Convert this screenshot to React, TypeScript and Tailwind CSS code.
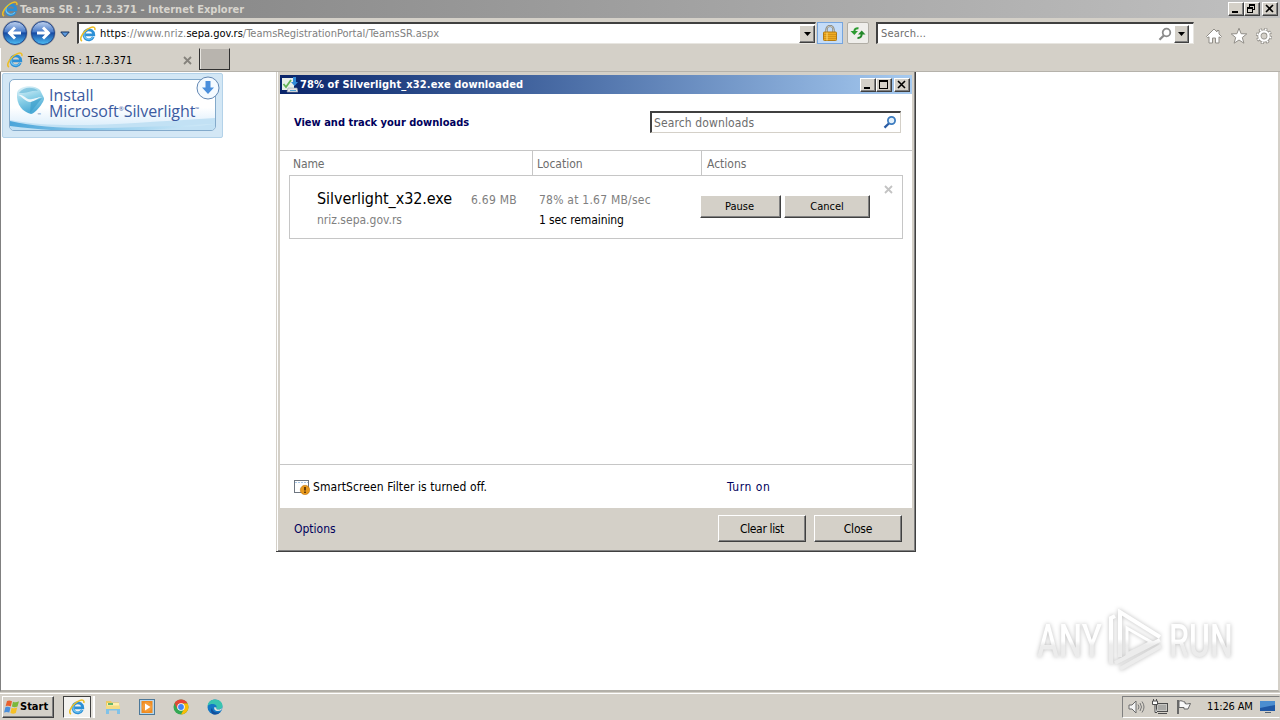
import React from "react";

const raised =
  "border border-t-white border-l-white border-r-[#404040] border-b-[#404040] shadow-[inset_-1px_-1px_0_#808080] bg-[#d4d0c8]";

function IELogo({ className = "w-[16px] h-[16px]" }: { className?: string }) {
  return (
    <svg viewBox="0 0 16 16" className={`${className} shrink-0`}>
      <path d="M13.3 11A5 5 0 1 1 13.800 8.900H5.400" fill="none" stroke="#2b8fd6" strokeWidth="2.800" />
      <path d="M12.900 11.200A5 5 0 0 1 4 9.500a5 5 0 0 1 1.500-4.600" fill="none" stroke="#74c6f2" strokeWidth="1.100" />
      <path d="M2 15.200C-1.500 13 3.500 4.400 10.500 1.600c3.200-1.200 5-.4 4.300 2.400" fill="none" stroke="#edbe24" strokeWidth="1.500" />
    </svg>
  );
}

function NavArrow({ back = false }: { back?: boolean }) {
  return (
    <svg viewBox="0 0 26 26" className="w-[26px] h-[26px] shrink-0">
      <defs>
        <linearGradient id={back ? "nb" : "nf"} x1="0" y1="0" x2="0" y2="1">
          <stop offset="0" stopColor="#c2d3ee" />
          <stop offset="0.44" stopColor="#4a7dca" />
          <stop offset="0.5" stopColor="#164aa3" />
          <stop offset="1" stopColor="#4fc0f6" />
        </linearGradient>
      </defs>
      <circle cx="13" cy="13" r="12.5" fill="#9a9a9b" />
      <circle cx="13" cy="13" r="11.5" fill={back ? "url(#nb)" : "url(#nf)"} stroke="#24488c" strokeWidth="1" />
      <path
        d={back ? "M19 13H8M13 7.500L7.500 13l5.500 5.500" : "M7 13h11M13 7.500L18.500 13 13 18.500"}
        fill="none"
        stroke="#fff"
        strokeWidth="2.900"
      />
    </svg>
  );
}

function DropArrow({ className }: { className: string }) {
  return (
    <div className={`${raised} ${className} flex items-center justify-center shrink-0`}>
      <svg viewBox="0 0 7 4" className="w-[7px] h-[4px]">
        <path d="M0 0h7L3.500 4z" fill="#000" />
      </svg>
    </div>
  );
}

function WinButton({ kind }: { kind: "min" | "max" | "restore" | "close" }) {
  return (
    <div className={`${raised} w-[16px] h-[14px] flex items-center justify-center shrink-0`}>
      <svg viewBox="0 0 12 10" className="w-[12px] h-[10px]" shapeRendering={kind === "close" ? "auto" : "crispEdges"}>
        {kind === "min" && <path d="M2 7h6v2H2z" />}
        {kind === "max" && <path d="M1 0h9v9H1zM2 2v6h7V2z" fillRule="evenodd" />}
        {kind === "restore" && (
          <path d="M3 0h6v6H7V5h1V2H4v1H3zM1 3h6v6H1zM2 5v3h4V5z" fillRule="evenodd" />
        )}
        {kind === "close" && <path d="M2 1l7 7M9 1L2 8" stroke="#000" strokeWidth="1.600" />}
      </svg>
    </div>
  );
}

function TitleBar() {
  return (
    <div className="h-[18px] shrink-0 flex items-center bg-linear-to-r from-[#808080] to-[#c0c0c0] pl-[2px] pr-[2px]">
      <IELogo />
      <span className="ml-[2px] mt-[2px] text-[11px] tracking-[0.020px] text-[#d8d5ce] font-bold">
        Teams SR : 1.7.3.371 - Internet Explorer
      </span>
      <div className="ml-auto flex items-center">
        <WinButton kind="min" />
        <WinButton kind="restore" />
        <div className="w-[2px]" />
        <WinButton kind="close" />
      </div>
    </div>
  );
}

function NavBar() {
  return (
    <div className="h-[30px] shrink-0 flex items-center pl-[2px]">
      <NavArrow back />
      <div className="w-[2px]" />
      <NavArrow />
      <svg viewBox="0 0 10 7" className="ml-[4px] mt-[2px] w-[10px] h-[7px]">
        <path d="M.800 1h8.400L5 5.800z" fill="#5c9be0" stroke="#14325f" />
      </svg>
      <div className="ml-[7px] w-[739px] h-[22px] flex items-center bg-white border-t-2 border-l-2 border-[#404040] border-r border-b border-r-[#e8e6e1] border-b-[#e8e6e1]">
        <IELogo className="ml-px w-[16px] h-[16px]" />
        <span className="ml-[4px] mt-[2px] text-[11px] text-[#808080] whitespace-pre">
          <span className="tracking-[0.180px]"><span className="text-black">https</span>://www.nriz.</span>
          <span className="text-black">sepa.gov.rs</span>
          <span>/TeamsRegistrationPortal/TeamsSR.aspx</span>
        </span>
        <DropArrow className="ml-auto w-[16px] h-[18px]" />
      </div>
      <div className="ml-px w-[26px] h-[22px] bg-[#c4dcf8] border border-[#76a5de] flex items-center justify-center">
        <svg viewBox="0 0 14 16" className="w-[14px] h-[16px]">
          <path d="M3.500 7V4.500a3.500 3.500 0 0 1 7 0V7" fill="none" stroke="#7c7a70" strokeWidth="2.200" />
          <path d="M3.500 7V4.500a3.500 3.500 0 0 1 7 0V7" fill="none" stroke="#d9d8cd" strokeWidth="0.800" />
          <rect x="0.500" y="7" width="13" height="8.500" rx="0.800" fill="#efab22" stroke="#b27a13" />
          <path d="M1 9.500h12M1 11.500h12M1 13.500h12" stroke="#c88a15" strokeWidth="0.700" />
          <path d="M4 7.500v8" stroke="#fbd976" />
        </svg>
      </div>
      <div className="ml-[4px] w-[22px] h-[22px] rounded-[2px] bg-[#efeeeb] border border-[#b1aea6] flex items-center justify-center">
        <svg viewBox="0 0 16 16" className="w-[16px] h-[16px]">
          <path d="M.5 6h7.500L4.300 10z" fill="#2c9b30" />
          <path d="M8.500 3.200C5.500 3 4.300 4.500 4.300 7" fill="none" stroke="#2c9b30" strokeWidth="2" />
          <path d="M8 9.500h7.500L11.700 5.500z" fill="#23892a" />
          <path d="M11.700 8.500c0 3-1.200 4.700-4.200 4.500" fill="none" stroke="#23892a" strokeWidth="2" />
        </svg>
      </div>
      <div className="ml-[7px] w-[318px] h-[22px] flex items-center bg-white border-t-2 border-l-2 border-[#404040] border-r border-b border-r-[#e8e6e1] border-b-[#e8e6e1]">
        <span className="ml-[3px] mt-[2px] text-[11px] tracking-[0.200px] text-[#6d6d6d]">Search...</span>
        <svg viewBox="0 0 14 14" className="ml-auto w-[14px] h-[14px]">
          <circle cx="8.500" cy="5.500" r="3.800" fill="none" stroke="#8b8b8b" strokeWidth="1.800" />
          <path d="M5.800 8.500L1.500 12.800" stroke="#8b8b8b" strokeWidth="2.300" />
        </svg>
        <DropArrow className="ml-[2px] mr-[4px] w-[15px] h-[18px]" />
      </div>
      <div className="ml-[11px] mt-[5px] flex items-center gap-[7px]">
        <svg viewBox="0 0 18 18" className="w-[18px] h-[18px]">
          <path d="M9 2L1.500 9.500l1.300 1.300L4 9.800V16h3.500v-5h3v5H14V9.800l1.200 1 1.300-1.300L14 7V3.500h-2V5z" fill="#fff" stroke="#918e88" />
        </svg>
        <svg viewBox="0 0 18 18" className="w-[18px] h-[18px]">
          <path d="M9 1.200l2.100 5.500 5.700.200-4.500 3.600 1.600 5.700L9 13l-4.900 3.200 1.600-5.700L1.200 6.900l5.700-.200z" fill="#fff" stroke="#918e88" />
        </svg>
        <svg viewBox="0 0 18 18" className="w-[18px] h-[18px]">
          <circle cx="9" cy="9" r="6.600" fill="none" stroke="#918e88" strokeWidth="3" strokeDasharray="3 2.184" />
          <circle cx="9" cy="9" r="4.600" fill="none" stroke="#918e88" strokeWidth="4" />
          <circle cx="9" cy="9" r="6.600" fill="none" stroke="#fff" strokeWidth="1.800" strokeDasharray="1.600 3.584" strokeDashoffset="-0.700" />
          <circle cx="9" cy="9" r="4.600" fill="none" stroke="#fff" strokeWidth="2.400" />
        </svg>
      </div>
    </div>
  );
}

function TabRow() {
  return (
    <div className="h-[24px] shrink-0 flex border-b border-[#b5b2ab]">
      <div className="w-[199px] h-[23px] flex items-center pl-[6px] border-l border-l-white">
        <IELogo className="mt-px w-[16px] h-[16px]" />
        <span className="ml-[5px] mt-[3px] text-[11px] text-black">Teams SR : 1.7.3.371</span>
        <svg viewBox="0 0 9 9" className="ml-auto mr-[7px] mt-px w-[9px] h-[9px]">
          <path d="M1 1l7 7M8 1L1 8" stroke="#85827c" strokeWidth="1.800" />
        </svg>
      </div>
      <div className="w-[31px] h-[22px] bg-[#b8b4ae] border border-l-[#303030] border-r-[#303030] border-b-[#303030] border-t-[#d4d0c8] shadow-[inset_1px_0_0_#e8e6e1]" />
    </div>
  );
}

function SilverlightBadge() {
  return (
    <div className="relative w-[221px] h-[65px] bg-[#d3e7f5] border border-[#b3d2e9] rounded-[2px] px-[6px] pt-[5px]">
      <div className="relative w-[207px] h-[52px] rounded-[5px] border border-[#83aacb] bg-linear-to-b from-white from-55% to-[#d4eafa] overflow-hidden">
        <svg viewBox="0 0 205 50" className="absolute inset-0 w-[205px] h-[50px]">
          <defs>
            <linearGradient id="wave" x1="0" x2="1">
              <stop offset="0" stopColor="#4ba5d9" />
              <stop offset="0.500" stopColor="#9bd0ee" />
              <stop offset="1" stopColor="#d4ebf8" />
            </linearGradient>
            <linearGradient id="gem" x1="0" y1="0" x2="0.300" y2="1">
              <stop offset="0" stopColor="#edf7fb" />
              <stop offset="0.500" stopColor="#8fd2e8" />
              <stop offset="1" stopColor="#4baad6" />
            </linearGradient>
          </defs>
          <path d="M0 40C50 50 120 43 205 38V50H0z" fill="#c2e1f4" />
          <path d="M0 41C45 52 110 48 205 44C130 53 60 54 0 46z" fill="url(#wave)" />
          <path d="M7 13c1-8 18-9 23-3l4 8c1 3-8 15-13 16C13 32 6 25 7 13z" fill="url(#gem)" />
          <path d="M9 13c5-7 15-6 19-2-6-1-9 2-15 2z" fill="#4aa9cf" opacity=".5" />
          <path d="M8 15c5-2 9 6 14 4 5-1 7-2 10-2-4 1-7 4-11 5-5 1-9-6-13-7z" fill="#f6fbfd" opacity=".9" />
          <path d="M21 22l11-4-12 15z" fill="#379bc9" opacity=".6" />
        </svg>
        <div className="relative ml-[39px] pt-[7px] flex flex-col font-['Open_Sans',sans-serif] text-[16px] leading-[16px] text-[#3b5aa0]">
          <span className="h-[16px]">Install</span>
          <div className="h-[16px] flex items-start whitespace-nowrap tracking-[-0.100px]">
            <span>Microsoft</span>
            <span className="w-[5px] text-[6px] leading-[12px]">®</span>
            <span>Silverlight</span>
            <span className="text-[5px] leading-[12px]">™</span>
          </div>
        </div>
        <span className="absolute left-[27px] top-[32px] text-[5px] leading-[6px] text-[#3b5aa0]">™</span>
      </div>
      <svg viewBox="0 0 24 24" className="absolute left-[193px] top-[2px] w-[24px] h-[24px]">
        <circle cx="12" cy="12" r="11" fill="#f4faff" stroke="#6287b3" />
        <path d="M9.500 5h5v6.500H18L12 18 6 11.500h3.500z" fill="#4a8fdc" />
      </svg>
    </div>
  );
}

function DownloadsWindow() {
  return (
    <div className="absolute left-[275px] top-0 w-[640px] h-[480px] flex flex-col bg-[#d4d0c8] border-r border-b border-[#404040] shadow-[inset_1px_0_0_#d4d0c8,inset_2px_0_0_#fff,inset_-1px_-1px_0_#808080] pl-[4px] pr-[3px] pt-[3px]">
      <div className="h-[19px] shrink-0 flex items-center bg-linear-to-r from-[#0a246a] to-[#a6caf0] pl-[2px] pr-[2px]">
        <svg viewBox="0 0 16 16" className="w-[16px] h-[16px]">
          <rect x="0" y="1" width="12" height="12" fill="#e9efe9" />
          <path d="M1.500 7l2.500 3 5-7" fill="none" stroke="#63b356" strokeWidth="1.800" />
          <path d="M11 0h3v5h2l-3.500 4L9 5h2z" fill="#338bd8" />
          <path d="M6 11h9l1 4H5z" fill="#e3e3e5" stroke="#96a0aa" strokeWidth=".6" />
          <path d="M8 13.500h6" stroke="#52a3d2" />
        </svg>
        <span className="ml-[2px] mt-[2px] text-[11px] font-bold text-white tracking-[0.110px]">78% of Silverlight_x32.exe downloaded</span>
        <div className="ml-auto flex items-center">
          <WinButton kind="min" />
          <WinButton kind="max" />
          <div className="w-[2px]" />
          <WinButton kind="close" />
        </div>
      </div>

      <div className="bg-white h-[414px] shrink-0 flex flex-col">
        <div className="h-[57px] shrink-0 flex items-center border-b border-[#c6c6c6] pl-[14px] pr-[11px]">
          <span className="mt-[3px] text-[11px] font-bold text-[#00005c]">View and track your downloads</span>
          <div className="ml-auto w-[251px] h-[22px] mb-px flex items-center border-t-2 border-l-2 border-t-[#404040] border-l-[#404040] border-r border-b border-r-[#d4d0c8] border-b-[#d4d0c8]">
            <span className="ml-[2px] mt-px text-[12px] tracking-[0.120px] text-[#6d6d6d]">Search downloads</span>
            <svg viewBox="0 0 14 14" className="ml-auto mr-[3px] w-[14px] h-[14px]">
              <circle cx="8.500" cy="5.500" r="3.600" fill="#e3f0fb" stroke="#3c7cc0" strokeWidth="1.800" />
              <path d="M5.800 8.500L1.500 12.600" stroke="#2a5ca4" strokeWidth="2.300" />
            </svg>
          </div>
        </div>
        <div className="h-[24px] shrink-0 flex text-[12px] leading-[26px] text-[#6d6d6d]">
          <div className="w-[253px] pl-[13px] border-r border-[#c6c6c6] tracking-[-0.150px]">Name</div>
          <div className="w-[169px] pl-[4px] border-r border-[#c6c6c6]">Location</div>
          <div className="pl-[5px]">Actions</div>
        </div>
        <div className="relative ml-[9px] w-[614px] h-[64px] shrink-0 border border-[#c6c6c6] flex">
          <div className="w-[221px] pl-[27px] pt-[11px] flex flex-col">
            <div className="flex items-center h-[24px]">
              <span className="w-[154px] shrink-0 text-[16px] tracking-[-0.070px] text-black">Silverlight_x32.exe</span>
              <span className="mt-px text-[12px] tracking-[0.250px] text-[#808080] whitespace-nowrap">6.69 MB</span>
            </div>
            <span className="text-[12px] leading-[18px] text-[#808080]">nriz.sepa.gov.rs</span>
          </div>
          <div className="w-[189px] pl-[28px] pt-[14px] flex flex-col text-[12px] leading-[20px] text-[#808080] whitespace-nowrap">
            <span className="tracking-[0.230px]">78% at 1.67 MB/sec</span>
            <span className="text-black tracking-[-0.110px]">1 sec remaining</span>
          </div>
          <div className="pt-[19px] flex gap-[3px] text-[11px] text-black">
            <button className={`${raised} w-[81px] h-[23px] pt-[2px] pr-[2px]`}>Pause</button>
            <button className={`${raised} w-[86px] h-[23px] pt-[2px]`}>Cancel</button>
          </div>
          <svg viewBox="0 0 9 9" className="ml-[14px] mt-[9px] w-[9px] h-[9px]">
            <path d="M1 1l7 7M8 1L1 8" stroke="#c3c3c3" strokeWidth="1.800" />
          </svg>
        </div>
        <div className="mt-auto h-[44px] shrink-0 flex items-center border-t border-[#c6c6c6] pl-[14px] text-[12px] text-black">
          <svg viewBox="0 0 16 16" className="w-[16px] h-[16px]">
            <rect x=".5" y="1.500" width="14" height="12" fill="#fff" stroke="#6e7680" />
            <path d="M1 3.500h13" stroke="#a8c8e8" strokeDasharray="2 1" />
            <circle cx="11" cy="11" r="4.700" fill="#e99a1d" stroke="#c27812" strokeWidth=".6" />
            <path d="M11 8v3.500M11 12.500v1.500" stroke="#402000" strokeWidth="1.500" />
          </svg>
          <span className="ml-[3px] w-[414px] tracking-[0.090px]">SmartScreen Filter is turned off.</span>
          <span className="text-[#00005c] tracking-[0.550px]">Turn on</span>
        </div>
      </div>

      <div className="h-[41px] flex items-center pl-[14px] pr-[10px] text-[12px]">
        <span className="text-[#00005c]">Options</span>
        <button className={`${raised} ml-auto w-[88px] h-[27px] tracking-[-0.350px]`}>Clear list</button>
        <button className={`${raised} ml-[8px] w-[88px] h-[27px] tracking-[-0.150px]`}>Close</button>
      </div>
    </div>
  );
}

function Watermark() {
  const word =
    "inline-block origin-left bg-linear-to-b from-white from-50% to-[#ececec] to-58% bg-clip-text text-transparent";
  return (
    <div className="absolute left-[1036px] top-[535px] w-[198px] h-[68px] flex items-center justify-between drop-shadow-[0_0_2px_#bdbdbd]">
      <span className="font-['Roboto',sans-serif] font-medium text-[47px] leading-[60px] w-[66px]">
        <span className={`${word} scale-x-[0.700]`}>ANY</span>
      </span>
      <svg viewBox="0 0 60 64" className="w-[60px] h-[64px] shrink-0" fill="none" strokeWidth="4">
        <defs>
          <linearGradient id="mark" gradientUnits="userSpaceOnUse" x1="0" y1="30" x2="0" y2="36">
            <stop offset="0" stopColor="#fff" />
            <stop offset="1" stopColor="#ececec" />
          </linearGradient>
        </defs>
        <g stroke="url(#mark)">
          <path d="M14 48V3l40 25" />
          <path d="M5 55V9l4-2M9 54l45-23M14 60l41-23" />
          <path d="M21 45V19l24 14z" strokeWidth="3" />
        </g>
      </svg>
      <span className="font-['Roboto',sans-serif] font-medium text-[47px] leading-[60px] w-[66px]">
        <span className={`${word} scale-x-[0.680]`}>RUN</span>
      </span>
    </div>
  );
}

function Taskbar() {
  return (
    <div className="h-[27px] shrink-0 flex items-center bg-[#d4d0c8] border-t border-t-white pl-[2px]">
      <div className={`${raised} w-[52px] h-[22px] flex items-center pl-px`}>
        <svg viewBox="0 0 16 16" className="w-[16px] h-[16px]">
          <path d="M3 2c2-1 3-.5 5 .3L6.800 7.500c-2-.8-3-.9-5.200-.200z" fill="#e8602d" />
          <path d="M9 2.700c2 .8 3.500.8 6-.500l-1.500 5.300c-2 1-3.500 1-5.600.100z" fill="#7ab83c" />
          <path d="M1.400 8.300c2-.8 3.300-.6 5.100.100L5.300 13.500c-2-.8-3.200-.8-5.200 0z" fill="#4a8fdc" />
          <path d="M7.600 8.700c2 .900 3.500.8 5.600-.100L11.800 14c-2 1-3.500.8-5.400 0z" fill="#f6c026" />
        </svg>
        <span className="mt-px text-[11px] font-bold text-black">Start</span>
      </div>
      <div className="ml-[9px] w-[28px] h-[22px] bg-[#f3f2ef] border border-t-[#404040] border-l-[#404040] border-r-[#404040] border-b-white flex items-center justify-center">
        <IELogo />
      </div>
      <div className="w-[4px] h-[22px] border-r-2 border-white bg-[#e4e2dc]" />
      <svg viewBox="0 0 16 16" className="ml-[10px] w-[16px] h-[16px]">
        <path d="M1 2h5l1 1.500h7V9H1z" fill="#eccb63" />
        <path d="M2 4h12v4H2z" fill="#fff0b0" />
        <path d="M3 4h5v2H3z" fill="#66b66c" />
        <path d="M1 7h14v8h-3v-3.500H4V15H1z" fill="#80c2e8" />
        <path d="M1 6.500h14V10H1z" fill="#f4dc83" />
      </svg>
      <svg viewBox="0 0 16 16" className="ml-[18px] w-[16px] h-[16px]">
        <rect x=".5" y=".5" width="15" height="15" fill="#b7d7ed" stroke="#4c7899" />
        <rect x="2.500" y="2" width="11" height="12" fill="#ef8b20" />
        <circle cx="8" cy="8" r="5" fill="#f49b37" />
        <path d="M6 4.500L11.500 8 6 11.500z" fill="#fff" />
      </svg>
      <svg viewBox="0 0 16 16" className="ml-[18px] w-[16px] h-[16px]">
        <circle cx="8" cy="8" r="7.500" fill="#34a853" />
        <path d="M1.500 4.200A7.500 7.500 0 0 1 14.500 4.200L8 5z" fill="#ea4335" />
        <path d="M1.500 4.200L8 5v2L4.500 10z" fill="#ea4335" />
        <path d="M8 4.500h6.600A7.500 7.500 0 0 1 8 15.500L11.500 9z" fill="#fbbc05" />
        <circle cx="8" cy="8" r="3.800" fill="#fff" />
        <circle cx="8" cy="8" r="2.900" fill="#4285f4" />
      </svg>
      <svg viewBox="0 0 16 16" className="ml-[18px] w-[16px] h-[16px]">
        <circle cx="8" cy="8" r="7.500" fill="#1478c5" />
        <path d="M.6 7C1 2.500 4.500.5 8 .5c4.500 0 7.500 3 7.500 6.200 0 2.500-2 3.800-4 3.800-2 0-2.600-.700-2-1.800C10.500 5 4 3.600.6 7z" fill="#39c4b0" />
        <path d="M5 9c.5 4 4.500 5.500 8.500 4A7.500 7.500 0 0 1 6 15.200C3.500 13.500 3.500 10 5 9z" fill="#124f9c" />
        <path d="M9.500 8.700c-.600 1.100 0 1.800 2 1.800 1.500 0 3-.6 4-2-.5 2.500-2 3.500-4.500 3.500-3 0-4.500-2-3.500-4z" fill="#e1e3de" />
      </svg>
      <div className="ml-auto w-[158px] h-[22px] flex items-center border border-t-[#808080] border-l-[#808080] border-b-white border-r-[#d4d0c8] pl-[5px]">
        <svg viewBox="0 0 17 16" className="w-[17px] h-[16px]">
          <path d="M1 6h3l4-4v12l-4-4H1z" fill="#f4f4f4" stroke="#6a6a6a" />
          <path d="M10 5.500q2 2.500 0 5M12 4q3 4 0 8M14 2.500q4 5.500 0 11" fill="none" stroke="#777" />
        </svg>
        <svg viewBox="0 0 16 16" className="ml-[7px] w-[16px] h-[16px]">
          <rect x="4.500" y="4.500" width="11" height="8" fill="#c6c6c2" stroke="#4d4d4d" />
          <rect x="6" y="6" width="8" height="5" fill="#a9a9a6" />
          <path d="M6 14.500h9" stroke="#4d4d4d" />
          <path d="M1.500 0v2M4.500 0v2" stroke="#4d4d4d" />
          <path d="M.5 2h5v3.500h-5zM3 6v7.500h2" fill="#fff" stroke="#4d4d4d" />
        </svg>
        <svg viewBox="0 0 16 16" className="ml-[8px] w-[16px] h-[16px]">
          <path d="M2 1v14" stroke="#5e5e5e" strokeWidth="1.800" />
          <path d="M3 2c3-1 4 1 6 1v1.500c2 1 3 0 5.500 0L12 10H8V8.500H3z" fill="#f8f8f8" stroke="#666" />
        </svg>
        <span className="ml-[15px] mt-px text-[11px] tracking-[-0.150px] text-black whitespace-nowrap">11:26 AM</span>
        <svg viewBox="0 0 16 14" className="ml-[7px] w-[16px] h-[14px] shrink-0">
          <path d="M0 1h15v10H0z" fill="#1f57a5" />
          <path d="M0 1h15v4L0 8z" fill="#4b8dd0" />
          <path d="M5 12h6v1H5z" fill="#526274" />
        </svg>
      </div>
    </div>
  );
}

export default function App() {
  return (
    <div className="w-[1280px] h-[720px] flex flex-col overflow-hidden bg-[#d4d0c8] font-['DejaVu_Sans_Condensed','DejaVu_Sans',sans-serif]">
      <TitleBar />
      <NavBar />
      <TabRow />
      <div className="relative h-[620px] shrink-0 bg-white border-l border-l-[#808080] border-r-2 border-r-[#d4d0c8] border-b-2 border-b-[#b3b0a9] pl-px">
        <div className="pt-px">
          <SilverlightBadge />
        </div>
        <DownloadsWindow />
        <Watermark />
      </div>
      <div className="h-px shrink-0" />
      <Taskbar />
    </div>
  );
}
